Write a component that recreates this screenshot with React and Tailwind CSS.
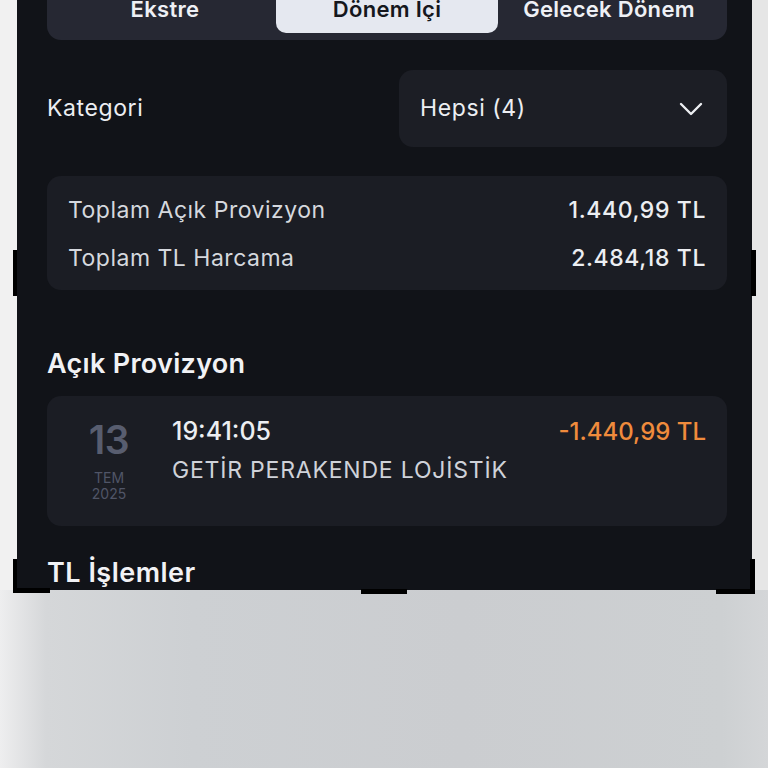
import React from "react";

function Handle({ className }) {
  return <div className={"absolute bg-black " + className} />;
}

export default function App() {
  const font = { fontFamily: "Inter, 'Noto Sans', sans-serif" };
  return (
    <div
      className="relative w-[768px] h-[768px] overflow-hidden bg-[linear-gradient(90deg,#eeeeef_0%,#d5d7d9_6%,#cdd0d3_25%,#cbcdd0_60%,#cdd0d2_94%,#d4d6d8_100%)]"
      style={font}
    >
      <div className="absolute left-0 top-0 w-[17px] h-[590px] bg-[#f1f1f1]" />
      <div className="absolute right-0 top-0 w-[17px] h-[590px] bg-[#e6e6e6]" />

      <div className="relative ml-[17px] w-[735px] h-[590px] bg-[#111318] overflow-hidden pl-[30px] pr-[25px] flex flex-col">
        {/* Tabs */}
        <div className="mt-[-22px] h-[62px] shrink-0 rounded-[14px] bg-[#262833] p-[7px] grid grid-cols-3">
          <div className="flex items-center justify-center text-[22px] font-semibold tracking-[0.3px] text-[#eef0f5]">Ekstre</div>
          <div className="flex items-center justify-center rounded-[10px] bg-[#e5e8f0] text-[22px] font-semibold tracking-[0.3px] text-[#15171d]">Dönem İçi</div>
          <div className="flex items-center justify-center text-[22px] font-semibold tracking-[0.3px] text-[#eef0f5]">Gelecek Dönem</div>
        </div>

        {/* Kategori */}
        <div className="mt-[30px] flex items-center justify-between">
          <span className="text-[23px] tracking-[0.6px] text-[#eceef2]">Kategori</span>
          <div className="w-[328px] h-[77px] rounded-[14px] bg-[#1c1e25] flex items-center justify-between pl-[21px] pr-[24px]">
            <span className="text-[23px] tracking-[0.6px] text-[#eceef2]">Hepsi (4)</span>
            <svg width="24" height="24" viewBox="0 0 24 24" fill="none" stroke="#eceef2" strokeWidth="2.4" strokeLinecap="round" strokeLinejoin="round">
              <path d="M2 7l10 10L22 7" />
            </svg>
          </div>
        </div>

        {/* Summary */}
        <div className="mt-[29px] rounded-[14px] bg-[#1b1d24] px-[21px] pt-[20px] pb-[18px] flex flex-col gap-[20px]">
          <div className="flex items-center justify-between h-[28px]">
            <span className="text-[23px] tracking-[0.5px] text-[#d5d8de]">Toplam Açık Provizyon</span>
            <span className="text-[23px] font-medium tracking-[0.6px] text-[#eceef2]">1.440,99 TL</span>
          </div>
          <div className="flex items-center justify-between h-[28px]">
            <span className="text-[23px] tracking-[0.5px] text-[#d5d8de]">Toplam TL Harcama</span>
            <span className="text-[23px] font-medium tracking-[0.6px] text-[#eceef2]">2.484,18 TL</span>
          </div>
        </div>

        <div className="mt-[58px] h-[32px] flex items-center text-[27px] font-semibold tracking-[0.3px] text-[#f1f2f5]">Açık Provizyon</div>

        {/* Transaction */}
        <div className="mt-[16px] h-[130px] rounded-[14px] bg-[#1b1d24] pl-[22px] pr-[21px] pt-[21px] flex">
          <div className="w-[80px] flex flex-col items-center">
            <span className="mt-[3px] text-[39px] font-semibold leading-[40px] text-[#585d6f] tracking-[-0.5px]">13</span>
            <span className="mt-[10px] text-[14px] leading-[16px] text-[#505567]">TEM</span>
            <span className="text-[14px] leading-[16px] text-[#505567]">2025</span>
          </div>
          <div className="ml-[23px] flex-1 flex flex-col">
            <div className="flex items-center justify-between h-[30px]">
              <span className="text-[25px] font-medium text-[#eceef2]">19:41:05</span>
              <span className="text-[24px] font-medium text-[#f08b3c]">-1.440,99 TL</span>
            </div>
            <div className="mt-[8px] h-[30px] flex items-center text-[23px] tracking-[0.8px] text-[#cfd2d9]">GETİR PERAKENDE LOJİSTİK</div>
          </div>
        </div>

        <div className="mt-[31px] h-[32px] flex items-center text-[27px] font-semibold tracking-[0.5px] text-[#f1f2f5]">TL İşlemler</div>
      </div>

      {/* crop handles */}
      <Handle className="left-[13px] top-[250px] w-[4px] h-[46px]" />
      <Handle className="left-[751px] top-[250px] w-[5px] h-[46px]" />
      <Handle className="left-[13px] top-[559px] w-[4px] h-[34px]" />
      <Handle className="left-[13px] top-[588px] w-[37px] h-[5px]" />
      <Handle className="left-[361px] top-[589px] w-[46px] h-[5px]" />
      <Handle className="left-[750px] top-[559px] w-[5px] h-[35px]" />
      <Handle className="left-[716px] top-[589px] w-[39px] h-[5px]" />
    </div>
  );
}
